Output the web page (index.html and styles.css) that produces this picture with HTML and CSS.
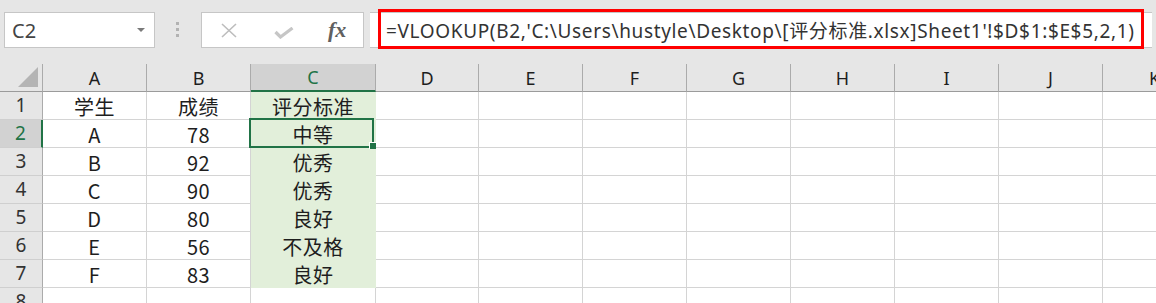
FILE: index.html
```html
<!DOCTYPE html>
<html lang="zh-CN">
<head>
    <meta charset="UTF-8">
    <title>VLOOKUP</title>
    <link rel="stylesheet" href="styles.css">
</head>
<body>
    <div class="toolbar">
        <div class="namebox">
            <span>C2</span>
            <svg class="arrow" width="8" height="5" viewBox="0 0 8 5"><path d="M0 0 L8 0 L4 4 Z" fill="#7a7a7a"/></svg>
        </div>
        <div class="grip"><i></i><i></i><i></i></div>
        <div class="fxbtns">
            <svg class="icon-x" width="18" height="15" viewBox="0 0 18 15"><path d="M2 1 L16 14 M16 1 L2 14" stroke="#bdbdbd" stroke-width="1.6" fill="none"/></svg>
            <svg class="icon-ok" width="20" height="12" viewBox="0 0 20 12"><path d="M1.5 5 L6.5 10 L18.5 1" stroke="#c6c6c6" stroke-width="3.2" fill="none"/></svg>
            <span class="fx">fx</span>
        </div>
        <div class="formula">
            <span class="ftext">=VLOOKUP(B2,'C:\Users\hustyle\Desktop\[评分标准.xlsx]Sheet1'!$D$1:$E$5,2,1)</span>
            <div class="mark"></div>
        </div>
    </div>

    <div class="sheet">
        <div class="row head">
            <div class="c corner"><svg width="21" height="21" viewBox="0 0 21 21"><path d="M0 20 L20 20 L20 0 Z" fill="#b4b4b4"/></svg></div>
            <div class="c">A</div><div class="c">B</div><div class="c sel">C</div><div class="c">D</div>
            <div class="c">E</div><div class="c">F</div><div class="c">G</div><div class="c">H</div>
            <div class="c">I</div><div class="c">J</div><div class="c">K</div>
        </div>
        <div class="row">
            <div class="c num">1</div>
            <div class="c">学生</div><div class="c">成绩</div><div class="c fill">评分标准</div><div class="c"></div>
            <div class="c"></div><div class="c"></div><div class="c"></div><div class="c"></div>
            <div class="c"></div><div class="c"></div><div class="c"></div>
        </div>
        <div class="row">
            <div class="c num sel">2</div>
            <div class="c">A</div><div class="c">78</div><div class="c fill active">中等<span class="handle"></span></div><div class="c"></div>
            <div class="c"></div><div class="c"></div><div class="c"></div><div class="c"></div>
            <div class="c"></div><div class="c"></div><div class="c"></div>
        </div>
        <div class="row">
            <div class="c num">3</div>
            <div class="c">B</div><div class="c">92</div><div class="c fill">优秀</div><div class="c"></div>
            <div class="c"></div><div class="c"></div><div class="c"></div><div class="c"></div>
            <div class="c"></div><div class="c"></div><div class="c"></div>
        </div>
        <div class="row">
            <div class="c num">4</div>
            <div class="c">C</div><div class="c">90</div><div class="c fill">优秀</div><div class="c"></div>
            <div class="c"></div><div class="c"></div><div class="c"></div><div class="c"></div>
            <div class="c"></div><div class="c"></div><div class="c"></div>
        </div>
        <div class="row">
            <div class="c num">5</div>
            <div class="c">D</div><div class="c">80</div><div class="c fill">良好</div><div class="c"></div>
            <div class="c"></div><div class="c"></div><div class="c"></div><div class="c"></div>
            <div class="c"></div><div class="c"></div><div class="c"></div>
        </div>
        <div class="row">
            <div class="c num">6</div>
            <div class="c">E</div><div class="c">56</div><div class="c fill">不及格</div><div class="c"></div>
            <div class="c"></div><div class="c"></div><div class="c"></div><div class="c"></div>
            <div class="c"></div><div class="c"></div><div class="c"></div>
        </div>
        <div class="row">
            <div class="c num">7</div>
            <div class="c">F</div><div class="c">83</div><div class="c fill">良好</div><div class="c"></div>
            <div class="c"></div><div class="c"></div><div class="c"></div><div class="c"></div>
            <div class="c"></div><div class="c"></div><div class="c"></div>
        </div>
        <div class="row">
            <div class="c num">8</div>
            <div class="c"></div><div class="c"></div><div class="c"></div><div class="c"></div>
            <div class="c"></div><div class="c"></div><div class="c"></div><div class="c"></div>
            <div class="c"></div><div class="c"></div><div class="c"></div>
        </div>
    </div>
</body>
</html>
```

FILE: styles.css
```css
body {
    margin: 0;
    width: 1156px;
    height: 303px;
    overflow: hidden;
    background-color: #fff;
    font-family: "Noto Sans CJK SC", sans-serif;
    color: #1e1e1e;
}
.toolbar {
    height: 64px;
    background-color: #e6e6e6;
    display: flex;
    align-items: flex-start;
    padding: 12px 0 0 4px;
    box-sizing: border-box;
}
.namebox {
    width: 151px;
    height: 36px;
    box-sizing: border-box;
    background-color: #fff;
    border: 1px solid #c6c6c6;
    display: flex;
    align-items: center;
    justify-content: space-between;
    padding: 0 9px 0 7px;
    font-family: "Noto Sans", sans-serif;
    font-size: 20px;
    color: #444;
}
.namebox span {
    line-height: 1;
    padding-top: 1px;
}
.grip {
    width: 3px;
    margin: 10px 22px 0 21px;
    display: flex;
    flex-direction: column;
    gap: 3px;
}
.grip i {
    width: 3px;
    height: 3px;
    background-color: #b2b2b2;
}
.fxbtns {
    width: 163px;
    height: 36px;
    box-sizing: border-box;
    background-color: #fff;
    border: 1px solid #c6c6c6;
    display: flex;
    align-items: center;
    padding-left: 18px;
}
.icon-x {
    margin-top: 1px;
}
.icon-ok {
    margin: 5px 0 0 36px;
}
.fx {
    margin-left: 34px;
    font-family: "Liberation Serif", serif;
    font-style: italic;
    font-weight: bold;
    font-size: 22px;
    color: #606060;
    line-height: 1;
}
.formula {
    position: relative;
    margin-left: 6px;
    width: 782px;
    height: 36px;
    box-sizing: border-box;
    background-color: #fff;
    border-top: 1px solid #c6c6c6;
    border-bottom: 1px solid #c6c6c6;
    display: flex;
    align-items: center;
    padding-left: 16px;
}
.ftext {
    font-family: "Noto Sans", "Noto Sans CJK SC", sans-serif;
    font-size: 19px;
    letter-spacing: 0.65px;
    color: #333;
    white-space: nowrap;
}
.mark {
    position: absolute;
    left: 8px;
    top: -4px;
    width: 766px;
    height: 40px;
    box-sizing: border-box;
    border: 3px solid #f00;
}
.sheet {
    height: 239px;
    overflow: hidden;
}
.row {
    display: grid;
    grid-template-columns: 43px 104px 104px 125px 103px repeat(7, 104px);
    height: 28px;
}
.c {
    box-sizing: border-box;
    border-right: 1px solid #d4d4d4;
    border-bottom: 1px solid #d4d4d4;
    display: flex;
    align-items: center;
    justify-content: center;
    padding-top: 2px;
    font-size: 20px;
    letter-spacing: 0.5px;
    line-height: 1;
    white-space: nowrap;
}
.head .c {
    background-color: #e6e6e6;
    border-right-color: #ababab;
    border-bottom-color: #9b9b9b;
    font-family: "Noto Sans", sans-serif;
    font-size: 18px;
    letter-spacing: 0;
    padding-top: 0;
}
.head .corner {
    align-items: flex-end;
    justify-content: flex-end;
    padding: 0 3px 3px 0;
}
.head .sel {
    background-color: #d2d2d2;
    border-bottom: 2px solid #217346;
    color: #217346;
}
.num {
    background-color: #e6e6e6;
    border-right-color: #ababab;
    border-bottom-color: #cfcfcf;
    font-family: "Noto Sans", sans-serif;
    font-size: 19px;
    letter-spacing: 0;
    color: #333;
    padding-top: 0;
}
.num.sel {
    background-color: #d2d2d2;
    border-right: 2px solid #217346;
    color: #217346;
}
.fill {
    background-color: #e2efda;
    border-right-color: #e2efda;
    border-bottom-color: #e2efda;
}
.active {
    position: relative;
}
.active::after {
    content: "";
    position: absolute;
    left: -2px;
    top: -2px;
    right: 1px;
    bottom: -1px;
    border: 2px solid #217346;
}
.handle {
    position: absolute;
    right: -1px;
    bottom: -2px;
    width: 6px;
    height: 6px;
    background-color: #217346;
    border-left: 1px solid #fff;
    border-top: 1px solid #fff;
    z-index: 1;
}
```
